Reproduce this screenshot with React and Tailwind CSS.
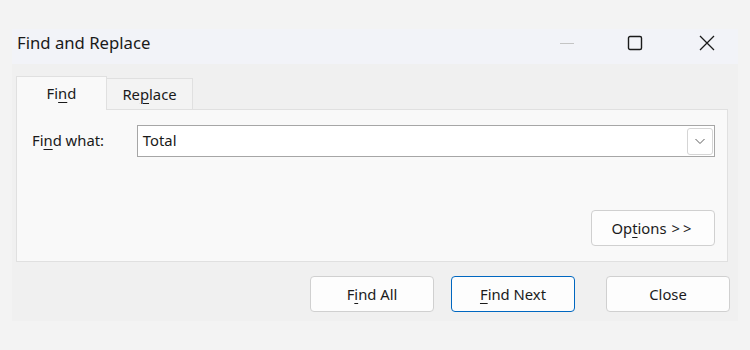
import React from 'react'

// Accelerator-key letter: underlined like a Win32 mnemonic.
function Acc({ children }) {
  return <span className="underline underline-offset-[3px] decoration-1">{children}</span>
}

function TitleButtons() {
  return (
    <div className="flex h-full items-center pb-[7px]">
      <div className="flex h-full w-[57px] items-center justify-center">
        <svg width="16" height="16" viewBox="0 0 16 16">
          <path d="M1 8.5h14" stroke="#c4c4c4" strokeWidth="1" />
        </svg>
      </div>
      <div className="flex h-full w-[80px] items-center justify-center">
        <svg width="16" height="16" viewBox="0 0 16 16">
          <rect x="1.5" y="1.5" width="13" height="13" rx="1.5" fill="none" stroke="#1a1a1a" strokeWidth="1.4" />
        </svg>
      </div>
      <div className="flex h-full w-[63px] items-center justify-center">
        <svg width="16" height="16" viewBox="0 0 16 16">
          <path d="M1 1l14 14M15 1L1 15" stroke="#1a1a1a" strokeWidth="1.3" />
        </svg>
      </div>
    </div>
  )
}

function Button({ children, primary, className = '' }) {
  return (
    <button
      className={
        'flex h-[36px] w-[124px] items-center justify-center rounded-[4px] bg-[#fdfdfd] text-[14.8px] text-[#1b1b1b] ' +
        (primary ? 'border border-[#0067c0] ' : 'border border-[#d0d0d0] ') +
        className
      }
    >
      {children}
    </button>
  )
}

export default function App() {
  return (
    <div
      className="h-[350px] w-[750px] overflow-hidden bg-[#f3f3f3] pt-[29px] pl-[12px]"
      style={{ fontFamily: '"Noto Sans", "Segoe UI", sans-serif' }}
    >
      <div className="flex h-[292px] w-[726px] flex-col bg-[#f0f0f0]">
        {/* Title bar */}
        <div className="flex h-[35px] shrink-0 items-center justify-between bg-[#f2f3f8]">
          <span className="pb-[7px] pl-[5px] text-[16.7px] text-[#1a1a1a]">Find and Replace</span>
          <TitleButtons />
        </div>

        {/* Tabs */}
        <div className="mt-[12px] flex pl-[4px] pr-[10px]">
          <div className="relative z-10 -mb-px flex h-[34px] w-[91px] items-center justify-center border border-b-0 border-[#e0e0e0] bg-[#f9f9f9] text-[14.8px] text-[#1a1a1a]">
            Fi<Acc>n</Acc>d
          </div>
          <div className="mt-[2px] flex h-[31px] w-[86px] items-center justify-center border border-l-0 border-b-0 border-[#e0e0e0] bg-[#f3f3f3] text-[14.8px] text-[#1a1a1a]">
            Re<Acc>p</Acc>lace
          </div>
        </div>

        {/* Tab panel */}
        <div className="mx-[4px] flex h-[153px] w-[712px] flex-col justify-between border border-[#e0e0e0] bg-[#f9f9f9] pt-[15px] pb-[15px] pl-[15px] pr-[12px]">
          <div className="flex items-center">
            <span className="w-[105px] pb-[2px] text-[14.8px] text-[#1a1a1a]">
              Fi<Acc>n</Acc>d what:
            </span>
            <div className="flex h-[32px] w-[579px] items-center justify-between border border-[#a6a6a6] bg-white pl-[5px] pr-[1px]">
              <span className="pb-[2px] text-[14.8px] text-[#1a1a1a]">Total</span>
              <div className="flex h-[27px] w-[26px] items-center justify-center rounded-[3px] border border-[#d5d5d5] bg-white">
                <svg width="12" height="12" viewBox="0 0 12 12">
                  <path d="M1.5 4l4.5 4.5L10.5 4" fill="none" stroke="#5f5f5f" strokeWidth="1" />
                </svg>
              </div>
            </div>
          </div>
          <div className="flex justify-end">
            <Button>
              Op<Acc>t</Acc>ions <span className="ml-[5px] tracking-[3px]">&gt;&gt;</span>
            </Button>
          </div>
        </div>

        {/* Bottom buttons */}
        <div className="mt-[14px] flex justify-end pr-[8px]">
          <Button className="w-[123px]">
            F<Acc>i</Acc>nd All
          </Button>
          <Button primary className="ml-[17px]">
            <Acc>F</Acc>ind Next
          </Button>
          <Button className="ml-[31px]">Close</Button>
        </div>
      </div>
    </div>
  )
}
